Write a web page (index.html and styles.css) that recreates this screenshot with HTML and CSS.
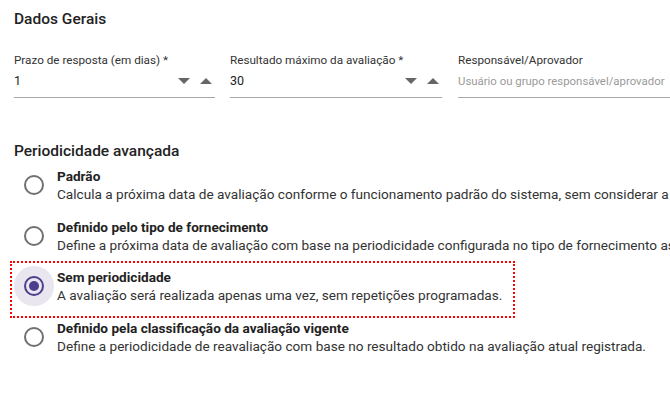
FILE: index.html
```html
<!DOCTYPE html>
<html lang="pt-BR">
<head>
<meta charset="utf-8">
<link rel="stylesheet" href="styles.css">
</head>
<body>
<div class="page">
  <h2 class="section-title">Dados Gerais</h2>
  <div class="fields">
    <div class="field f1">
      <label class="label">Prazo de resposta (em dias) *</label>
      <div class="control">
        <span class="value">1</span>
        <span class="spin"><i class="tri down"></i><i class="tri up"></i></span>
      </div>
    </div>
    <div class="field f2">
      <label class="label">Resultado máximo da avaliação *</label>
      <div class="control">
        <span class="value">30</span>
        <span class="spin"><i class="tri down"></i><i class="tri up"></i></span>
      </div>
    </div>
    <div class="field f3">
      <label class="label">Responsável/Aprovador</label>
      <div class="control">
        <span class="value placeholder">Usuário ou grupo responsável/aprovador</span>
      </div>
    </div>
  </div>

  <h2 class="section-title second">Periodicidade avançada</h2>
  <div class="options">
    <div class="option">
      <span class="radio-wrap"><span class="radio"></span></span>
      <div class="opt-text">
        <div class="opt-title">Padrão</div>
        <div class="opt-desc">Calcula a próxima data de avaliação conforme o funcionamento padrão do sistema, sem considerar a periodicidade configurada.</div>
      </div>
    </div>
    <div class="option">
      <span class="radio-wrap"><span class="radio"></span></span>
      <div class="opt-text">
        <div class="opt-title">Definido pelo tipo de fornecimento</div>
        <div class="opt-desc">Define a próxima data de avaliação com base na periodicidade configurada no tipo de fornecimento associado.</div>
      </div>
    </div>
    <div class="option focused">
      <span class="radio-wrap checked"><span class="radio"></span></span>
      <div class="opt-text">
        <div class="opt-title">Sem periodicidade</div>
        <div class="opt-desc">A avaliação será realizada apenas uma vez, sem repetições programadas.</div>
      </div>
    </div>
    <div class="option">
      <span class="radio-wrap"><span class="radio"></span></span>
      <div class="opt-text">
        <div class="opt-title">Definido pela classificação da avaliação vigente</div>
        <div class="opt-desc">Define a periodicidade de reavaliação com base no resultado obtido na avaliação atual registrada.</div>
      </div>
    </div>
  </div>
</div>
</body>
</html>
```

FILE: styles.css
```css
html, body {
  margin: 0;
  padding: 0;
  background: #ffffff;
  overflow: hidden;
}
body {
  width: 670px;
  height: 400px;
  font-family: Roboto, "Liberation Sans", sans-serif;
  color: #222;
}
.page {
  padding: 9px 0 0 14px;
  white-space: nowrap;
}
.section-title {
  margin: 0;
  font-size: 15.5px;
  line-height: 20px;
  font-weight: 500;
  color: #222;
}
.section-title.second {
  margin-top: 43px;
}
.fields {
  display: flex;
  margin-top: 23px;
}
.field {
  display: flex;
  flex-direction: column;
  flex: none;
}
.f1 { width: 201px; margin-right: 15px; }
.f2 { width: 212px; margin-right: 16px; }
.f3 { width: 240px; }
.label {
  font-size: 11.7px;
  line-height: 16px;
  color: #333;
}
.control {
  display: flex;
  align-items: center;
  margin-top: 3px;
  height: 20px;
  padding-bottom: 6px;
  border-bottom: 1px solid #a8a8a8;
}
.value {
  flex: 1;
  font-size: 12.5px;
  line-height: 20px;
  color: #222;
}
.value.placeholder {
  font-size: 11.4px;
  color: #9a9a9a;
}
.spin {
  display: flex;
  align-items: center;
  gap: 10px;
  padding-right: 3px;
}
.tri {
  display: block;
  width: 0;
  height: 0;
  border-left: 6px solid transparent;
  border-right: 6px solid transparent;
}
.tri.down { border-top: 6px solid #666; }
.tri.up { border-bottom: 6px solid #666; }

.options {
  display: flex;
  flex-direction: column;
  margin-top: 6px;
}
.option {
  display: flex;
  align-items: center;
  width: max-content;
  padding-bottom: 14.7px;
}
.option.focused {
  position: relative;
}
.option.focused::after {
  content: "";
  position: absolute;
  top: -7px;
  bottom: 1px;
  left: -4px;
  right: -13px;
  border: 2px dotted #f00;
}
.radio-wrap {
  flex: none;
  width: 40px;
  height: 40px;
  margin: -2px 3px -2px 0;
  border-radius: 50%;
  display: flex;
  align-items: center;
  justify-content: center;
}
.radio {
  box-sizing: border-box;
  width: 20px;
  height: 20px;
  border-radius: 50%;
  border: 2px solid #707070;
  display: flex;
  align-items: center;
  justify-content: center;
}
.radio-wrap.checked {
  background: #e9e6f0;
}
.radio-wrap.checked .radio {
  border-color: #4b3f8c;
}
.radio-wrap.checked .radio::after {
  content: "";
  width: 10px;
  height: 10px;
  border-radius: 50%;
  background: #4b3f8c;
}
.opt-text {
  display: flex;
  flex-direction: column;
}
.opt-title {
  font-size: 13.6px;
  line-height: 18px;
  font-weight: 700;
  color: #222;
}
.opt-desc {
  font-size: 13.6px;
  line-height: 18px;
  color: #333;
}
```
